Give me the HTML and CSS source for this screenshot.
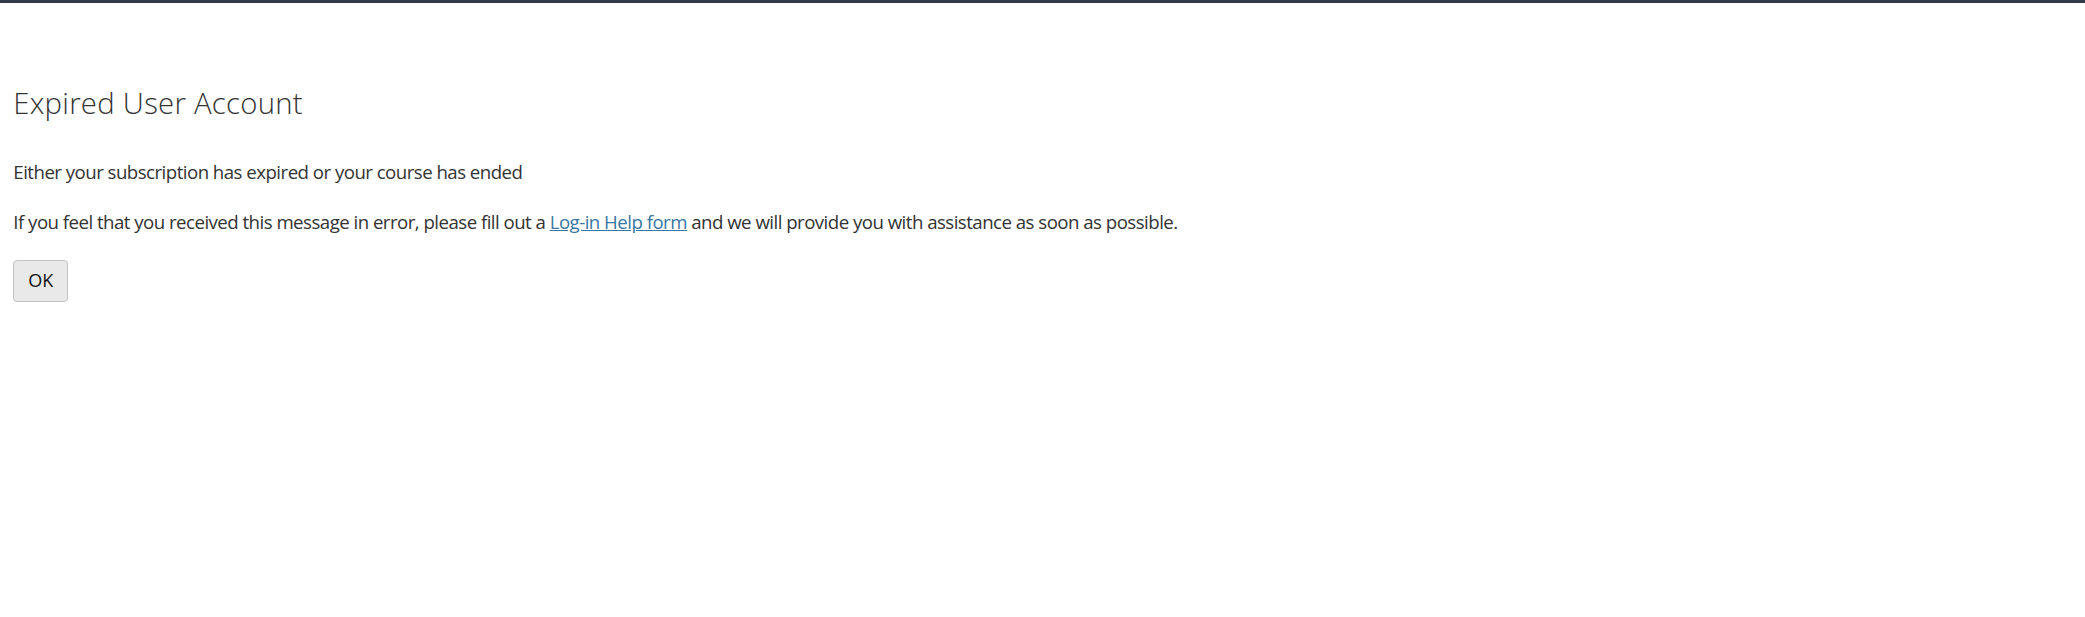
FILE: index.html
```html
<!DOCTYPE html>
<html lang="en">
<head>
<meta charset="utf-8">
<title>Expired User Account</title>
<link rel="stylesheet" href="styles.css">
</head>
<body>
<div class="topbar"></div>
<main class="content">
  <h1 class="title">Expired User Account</h1>
  <p class="msg">Either your subscription has expired or your course has ended</p>
  <p class="msg">If you feel that you received this message in error, please fill out a <a class="link" href="#">Log-in Help form</a> and we will provide you with assistance as soon as possible.</p>
  <button class="btn" type="button">OK</button>
</main>
</body>
</html>
```

FILE: styles.css
```css
html, body {
  margin: 0;
  padding: 0;
  background: #ffffff;
}
body {
  font-family: "Open Sans", "Liberation Sans", Arial, sans-serif;
  color: #333333;
}
.topbar {
  height: 3px;
  background: #323a4a;
}
.content {
  padding: 0 13.33px;
}
.title {
  margin: 83.8px 0 0 0;
  font-size: 29.33px;
  font-weight: 300;
  line-height: 32.27px;
  letter-spacing: 0.25px;
  color: #333333;
}
.msg {
  margin: 0;
  font-size: 18.67px;
  line-height: 26.67px;
  letter-spacing: -0.53px;
}
.title + .msg {
  margin-top: 39.6px;
}
.msg + .msg {
  margin-top: 24px;
}
.link {
  color: #3a77a3;
  text-decoration: underline;
}
.btn {
  display: block;
  margin-top: 23.9px;
  box-sizing: border-box;
  width: 55px;
  height: 42px;
  padding: 7px 0 9px 0;
  font-family: "Open Sans", "Liberation Sans", Arial, sans-serif;
  font-size: 18px;
  line-height: 24px;
  color: #111111;
  background: #e9e9e9;
  border: 1px solid #c4c4c4;
  border-radius: 4px;
  text-align: center;
}
```
